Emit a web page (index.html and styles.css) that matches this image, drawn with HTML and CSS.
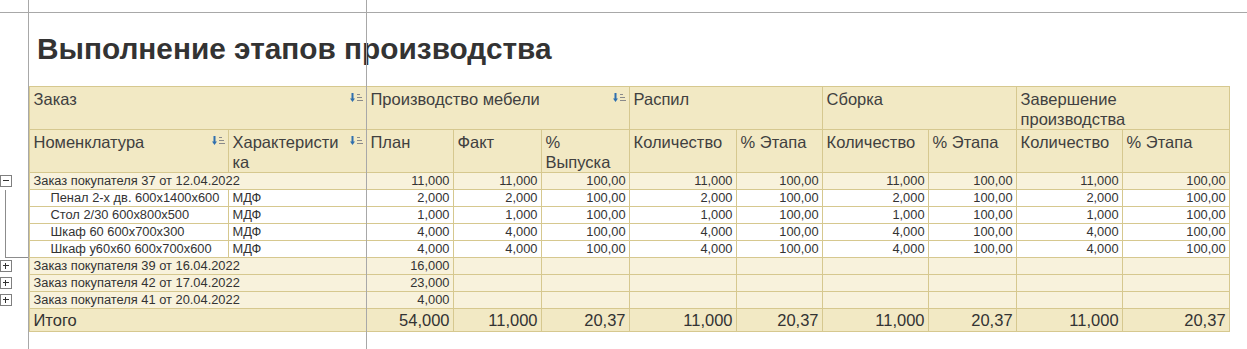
FILE: index.html
```html
<!DOCTYPE html>
<html lang="ru">
<head>
<meta charset="utf-8">
<title>Выполнение этапов производства</title>
<link rel="stylesheet" href="styles.css">
</head>
<body>
<div class="sheet">
  <h1 class="title">Выполнение этапов производства</h1>
  <table class="report">
    <colgroup>
      <col class="c-g"><col class="c-nom"><col class="c-char">
      <col class="c-87"><col class="c-88"><col class="c-88">
      <col class="c-107"><col class="c-86">
      <col class="c-106"><col class="c-88">
      <col class="c-106"><col class="c-107">
    </colgroup>
    <thead>
      <tr class="h1">
        <td class="g"></td>
        <th colspan="2"><div class="hc"><span>Заказ</span><svg class="sort" viewBox="0 0 14 10" width="14" height="10"><path d="M2.5 0v6" stroke="#2f6fae" stroke-width="2"/><path d="M0 5.5h5L2.5 9z" fill="#2f6fae"/><path d="M7 1.5h3M7 4.5h5M7 7.5h6" stroke="#8a8a8a" stroke-width="1"/></svg></div></th>
        <th colspan="3"><div class="hc"><span>Производство мебели</span><svg class="sort" viewBox="0 0 14 10" width="14" height="10"><path d="M2.5 0v6" stroke="#2f6fae" stroke-width="2"/><path d="M0 5.5h5L2.5 9z" fill="#2f6fae"/><path d="M7 1.5h3M7 4.5h5M7 7.5h6" stroke="#8a8a8a" stroke-width="1"/></svg></div></th>
        <th colspan="2"><div class="hc"><span>Распил</span></div></th>
        <th colspan="2"><div class="hc"><span>Сборка</span></div></th>
        <th colspan="2"><div class="hc"><span>Завершение<br>производства</span></div></th>
      </tr>
      <tr class="h2">
        <td class="g"></td>
        <th><div class="hc"><span>Номенклатура</span><svg class="sort" viewBox="0 0 14 10" width="14" height="10"><path d="M2.5 0v6" stroke="#2f6fae" stroke-width="2"/><path d="M0 5.5h5L2.5 9z" fill="#2f6fae"/><path d="M7 1.5h3M7 4.5h5M7 7.5h6" stroke="#8a8a8a" stroke-width="1"/></svg></div></th>
        <th><div class="hc"><span class="brk">Характеристи<wbr>ка</span><svg class="sort" viewBox="0 0 14 10" width="14" height="10"><path d="M2.5 0v6" stroke="#2f6fae" stroke-width="2"/><path d="M0 5.5h5L2.5 9z" fill="#2f6fae"/><path d="M7 1.5h3M7 4.5h5M7 7.5h6" stroke="#8a8a8a" stroke-width="1"/></svg></div></th>
        <th><div class="hc"><span>План</span></div></th>
        <th><div class="hc"><span>Факт</span></div></th>
        <th><div class="hc"><span>%<br>Выпуска</span></div></th>
        <th><div class="hc"><span>Количество</span></div></th>
        <th><div class="hc"><span>% Этапа</span></div></th>
        <th><div class="hc"><span>Количество</span></div></th>
        <th><div class="hc"><span>% Этапа</span></div></th>
        <th><div class="hc"><span>Количество</span></div></th>
        <th><div class="hc"><span>% Этапа</span></div></th>
      </tr>
    </thead>
    <tbody>
      <tr class="grp">
        <td class="g g-open"><span class="tb tb-minus"></span></td>
        <td colspan="2" class="t">Заказ покупателя 37 от 12.04.2022</td>
        <td class="n">11,000</td><td class="n">11,000</td><td class="n">100,00</td>
        <td class="n">11,000</td><td class="n">100,00</td>
        <td class="n">11,000</td><td class="n">100,00</td>
        <td class="n">11,000</td><td class="n">100,00</td>
      </tr>
      <tr class="det">
        <td class="g g-line"></td>
        <td class="t ind">Пенал 2-х дв. 600x1400x600</td><td class="t">МДФ</td>
        <td class="n">2,000</td><td class="n">2,000</td><td class="n">100,00</td>
        <td class="n">2,000</td><td class="n">100,00</td>
        <td class="n">2,000</td><td class="n">100,00</td>
        <td class="n">2,000</td><td class="n">100,00</td>
      </tr>
      <tr class="det">
        <td class="g g-line"></td>
        <td class="t ind">Стол 2/30 600x800x500</td><td class="t">МДФ</td>
        <td class="n">1,000</td><td class="n">1,000</td><td class="n">100,00</td>
        <td class="n">1,000</td><td class="n">100,00</td>
        <td class="n">1,000</td><td class="n">100,00</td>
        <td class="n">1,000</td><td class="n">100,00</td>
      </tr>
      <tr class="det">
        <td class="g g-line"></td>
        <td class="t ind">Шкаф 60 600x700x300</td><td class="t">МДФ</td>
        <td class="n">4,000</td><td class="n">4,000</td><td class="n">100,00</td>
        <td class="n">4,000</td><td class="n">100,00</td>
        <td class="n">4,000</td><td class="n">100,00</td>
        <td class="n">4,000</td><td class="n">100,00</td>
      </tr>
      <tr class="det">
        <td class="g g-last"></td>
        <td class="t ind">Шкаф у60х60 600х700х600</td><td class="t">МДФ</td>
        <td class="n">4,000</td><td class="n">4,000</td><td class="n">100,00</td>
        <td class="n">4,000</td><td class="n">100,00</td>
        <td class="n">4,000</td><td class="n">100,00</td>
        <td class="n">4,000</td><td class="n">100,00</td>
      </tr>
      <tr class="grp">
        <td class="g"><span class="tb tb-plus"></span></td>
        <td colspan="2" class="t">Заказ покупателя 39 от 16.04.2022</td>
        <td class="n">16,000</td><td></td><td></td><td></td><td></td><td></td><td></td><td></td><td></td>
      </tr>
      <tr class="grp">
        <td class="g"><span class="tb tb-plus"></span></td>
        <td colspan="2" class="t">Заказ покупателя 42 от 17.04.2022</td>
        <td class="n">23,000</td><td></td><td></td><td></td><td></td><td></td><td></td><td></td><td></td>
      </tr>
      <tr class="grp">
        <td class="g"><span class="tb tb-plus"></span></td>
        <td colspan="2" class="t">Заказ покупателя 41 от 20.04.2022</td>
        <td class="n">4,000</td><td></td><td></td><td></td><td></td><td></td><td></td><td></td><td></td>
      </tr>
      <tr class="tot">
        <td class="g"></td>
        <td colspan="2" class="t">Итого</td>
        <td class="n">54,000</td><td class="n">11,000</td><td class="n">20,37</td>
        <td class="n">11,000</td><td class="n">20,37</td>
        <td class="n">11,000</td><td class="n">20,37</td>
        <td class="n">11,000</td><td class="n">20,37</td>
      </tr>
    </tbody>
  </table>
  <div class="split split-h1"></div>
  <div class="split split-h2"></div>
  <div class="split split-v1"></div>
  <div class="split split-v2"></div>
</div>
</body>
</html>
```
FILE: styles.css
```css
html, body {
  margin: 0;
  padding: 0;
  background: #ffffff;
}

body {
  font-family: "Liberation Sans", Arial, sans-serif;
  color: #333333;
}

.sheet {
  position: relative;
  width: 1247px;
  height: 349px;
  overflow: hidden;
}

.title {
  margin: 0;
  padding: 31px 0 19px 37px;
  height: 36px;
  line-height: 36px;
  font-size: 29.8px;
  font-weight: bold;
  color: #333333;
  white-space: nowrap;
}

.report {
  border-collapse: collapse;
  table-layout: fixed;
  width: 1229px;
}

.c-g { width: 29px; }
.c-nom { width: 199px; }
.c-char { width: 138px; }
.c-86 { width: 86px; }
.c-87 { width: 87px; }
.c-88 { width: 88px; }
.c-106 { width: 106px; }
.c-107 { width: 107px; }

.report th,
.report td {
  border: 1px solid #d6c88f;
  padding: 0;
  overflow: hidden;
}

.report .g {
  border: none;
  background: transparent;
  vertical-align: middle;
}

.report th {
  background: #f2e9c4;
  font-weight: normal;
  text-align: left;
  vertical-align: top;
  font-size: 16.5px;
  line-height: 20px;
  color: #404040;
}

.h1 th, .h1 .g { height: 42px; }
.h2 th, .h2 .g { height: 42px; }

.hc {
  display: flex;
  justify-content: space-between;
  align-items: flex-start;
  padding: 2px 2px 0 4px;
}

.brk { min-width: 0; }

.sort {
  flex: none;
  margin-top: 4px;
}

.report tbody td {
  height: 16px;
  font-size: 12.85px;
  line-height: 16px;
  white-space: nowrap;
}

.report td.t {
  padding-left: 4px;
  text-align: left;
}

.report td.ind {
  padding-left: 21px;
}

.report td.n {
  text-align: right;
  padding-right: 3px;
}

.grp td:not(.g) { background: #f8f2dc; }
.det td:not(.g) { background: #ffffff; }

.tot td:not(.g) {
  background: #f2e9c4;
  height: 22px;
  font-size: 16.5px;
  line-height: 22px;
}

.tb {
  display: block;
  position: relative;
  width: 10px;
  height: 10px;
  margin-left: 0;
  border: 1px solid #7f7f7f;
  background: #ffffff;
}

.tb::before {
  content: "";
  position: absolute;
  left: 2px;
  right: 2px;
  top: 4px;
  height: 1px;
  background: #333333;
}

.tb-plus::after {
  content: "";
  position: absolute;
  top: 2px;
  bottom: 2px;
  left: 4px;
  width: 1px;
  background: #333333;
}

.g-open {
  background: linear-gradient(#8c8c8c, #8c8c8c) 5px 100% / 1px 3px no-repeat;
}

.report .g-line {
  background: linear-gradient(#8c8c8c, #8c8c8c) 5px 0 / 1px 100% no-repeat;
}

.report .g-last {
  background:
    linear-gradient(#8c8c8c, #8c8c8c) 5px 0 / 1px 100% no-repeat,
    linear-gradient(#8c8c8c, #8c8c8c) 5px 100% / 24px 1px no-repeat;
}

.split {
  position: absolute;
  background: #a8a8a8;
}

.split-h1 { left: 0; right: 0; top: 12px; height: 1px; }
.split-h2 { left: 0; right: 0; top: 172px; height: 1px; background: #b0b0b0; z-index: -1; }
.split-v1 { top: 0; bottom: 0; left: 28px; width: 1px; }
.split-v2 { top: 0; bottom: 0; left: 366px; width: 1px; }
```
